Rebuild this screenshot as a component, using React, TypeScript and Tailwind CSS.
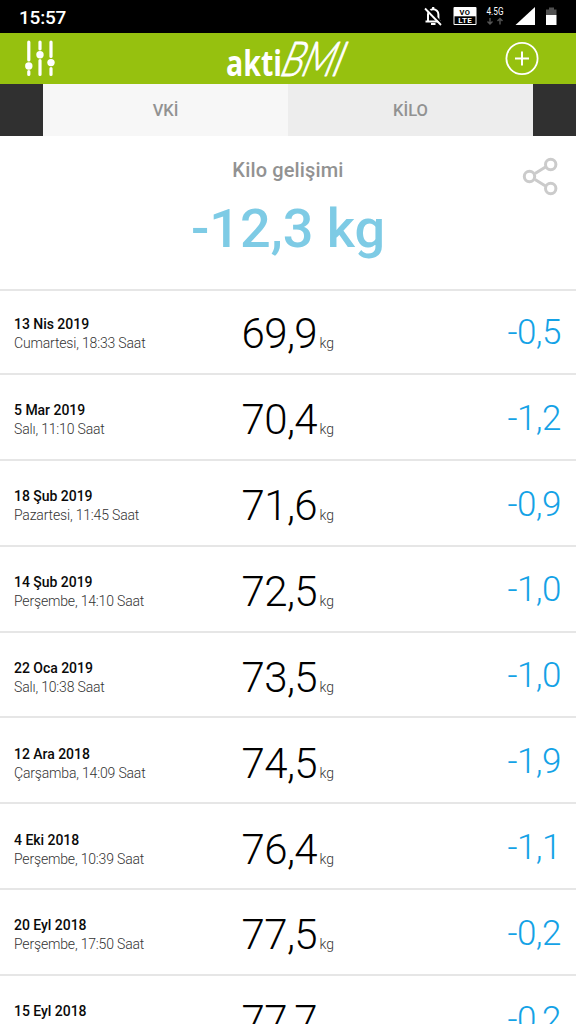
import React from 'react';

type Entry = { date: string; time?: string; weight: string; delta: string };

const entries: Entry[] = [
  { date: '13 Nis 2019', time: 'Cumartesi, 18:33 Saat', weight: '69,9', delta: '-0,5' },
  { date: '5 Mar 2019', time: 'Salı, 11:10 Saat', weight: '70,4', delta: '-1,2' },
  { date: '18 Şub 2019', time: 'Pazartesi, 11:45 Saat', weight: '71,6', delta: '-0,9' },
  { date: '14 Şub 2019', time: 'Perşembe, 14:10 Saat', weight: '72,5', delta: '-1,0' },
  { date: '22 Oca 2019', time: 'Salı, 10:38 Saat', weight: '73,5', delta: '-1,0' },
  { date: '12 Ara 2018', time: 'Çarşamba, 14:09 Saat', weight: '74,5', delta: '-1,9' },
  { date: '4 Eki 2018', time: 'Perşembe, 10:39 Saat', weight: '76,4', delta: '-1,1' },
  { date: '20 Eyl 2018', time: 'Perşembe, 17:50 Saat', weight: '77,5', delta: '-0,2' },
  { date: '15 Eyl 2018', weight: '77,7', delta: '-0,2' },
];

function StatusBar() {
  return (
    <div className="flex h-[33px] shrink-0 justify-between bg-black text-white">
      <span className="pl-[19px] pt-[7px] text-[19px] leading-[21px] font-medium tracking-[-0.2px]">15:57</span>
      <svg className="h-[33px] w-[166px]" viewBox="410 0 166 33" fill="none">
        <path d="M428 21V14.500a5.200 5.200 0 0 1 10.400 0V21M425.500 21.500h15.500" stroke="#fff" strokeWidth="2" />
        <path d="M433.200 7v3M431 24h4.500" stroke="#fff" strokeWidth="2.200" />
        <path d="M426.500 7.500 442.500 24" stroke="#000" strokeWidth="2" />
        <path d="M425 8.500 441 25" stroke="#fff" strokeWidth="1.800" />
        <rect x="453.500" y="7" width="23" height="18" rx="1" fill="#fff" />
        <rect x="454.500" y="16.300" width="21" height="7.700" fill="#000" />
        <text x="465" y="14.700" fontSize="7.500" fontWeight="700" textAnchor="middle" fill="#000" letterSpacing="0.500">VO</text>
        <text x="465.200" y="23.200" fontSize="8" fontWeight="700" textAnchor="middle" fill="#fff" letterSpacing="0.300">LTE</text>
        <text x="486.500" y="15" fontSize="10.500" textLength="17" lengthAdjust="spacingAndGlyphs" fill="#fff">4.5G</text>
        <path d="M490 18v6M487.500 21.500l2.500 2.500 2.500-2.500M500 24.500v-6M497.500 21l2.500-2.500 2.500 2.500" stroke="#555" strokeWidth="1.400" />
        <path d="M535 7v18h-19.500z" fill="#fff" />
        <path d="M549 7.500h5v2h2.500V15H546V9.500h3z" fill="#505050" />
        <path d="M546 15h10.500v10H546z" fill="#fff" />
      </svg>
    </div>
  );
}

function AppBar() {
  return (
    <header className="flex h-[51px] shrink-0 items-start justify-between bg-[#96c10f]">
      <svg className="h-[51px] w-[76px]" viewBox="0 33 76 51" fill="none" stroke="#fff" strokeWidth="3.200" strokeLinecap="round">
        <path d="M28.800 42v18M28.800 71.500v3M40 42v7M40 60.500v14M51 42v14.500M51 68.500v6" />
        <g fill="#fff" stroke="none">
          <circle cx="28.800" cy="66" r="3.700" />
          <circle cx="40" cy="54.800" r="3.700" />
          <circle cx="51" cy="62.600" r="3.700" />
        </g>
      </svg>
      <svg className="h-[51px] w-[140px]" viewBox="218 33 140 51" fill="#fff">
        <text x="226" y="75.500" fontSize="36" fontWeight="700" textLength="56" lengthAdjust="spacingAndGlyphs" className="font-['Open_Sans',sans-serif]">akti</text>
        <text
          transform="translate(279 75.500) skewX(-17) scale(0.780 1)"
          x="0 27 66"
          fontSize="48"
          fontWeight="300"
          fontStyle="italic"
          stroke="#fff"
          strokeWidth="1"
          strokeLinejoin="round"
          className="font-['Lato',sans-serif]"
        >
          BMI
        </text>
      </svg>
      <svg className="h-[51px] w-[76px]" viewBox="500 33 76 51" fill="none" stroke="#fff">
        <circle cx="522" cy="58.500" r="15.600" strokeWidth="1.800" />
        <path d="M515 58.500h14M522 51.500v14" strokeWidth="2" />
      </svg>
    </header>
  );
}

function Tabs() {
  return (
    <nav className="flex h-[52px] shrink-0 bg-[#303030] px-[43px] text-[16.5px] font-medium text-[#929292]">
      <button className="flex flex-1 items-center justify-center bg-[#f7f7f7] pt-[2px]">VKİ</button>
      <button className="flex flex-1 items-center justify-center bg-[#ededed] pt-[2px]">KİLO</button>
    </nav>
  );
}

function Summary() {
  return (
    <section className="relative flex h-[155px] shrink-0 flex-col items-center border-b-2 border-[#e6e6e6] pt-[22px]">
      <h1 className="text-[20px] leading-6 font-medium tracking-[0.15px] text-[#929292]">Kilo gelişimi</h1>
      <p className="mt-[14px] text-[54px] leading-[66px] font-medium text-[#7ecbe5]">-12,3 kg</p>
      <svg className="absolute top-[20px] right-[16px] h-[42px] w-[40px]" viewBox="520 156 40 42" fill="none" stroke="#cbcbcb" strokeWidth="3">
        <path d="M535 173.500l10.500-6.500M535 179.500l10.500 6.500" />
        <circle cx="529.500" cy="176.500" r="5.200" />
        <circle cx="550.700" cy="164.500" r="5.200" />
        <circle cx="550.700" cy="188.500" r="5.200" />
      </svg>
    </section>
  );
}

function Row({ entry, first }: { entry: Entry; first: boolean }) {
  return (
    <li
      className={`flex shrink-0 items-end border-b-2 border-[#e6e6e6] pr-[15px] pl-[14px] ${first ? 'h-[84px]' : 'h-[85.870px]'}`}
    >
      <div className="w-[227.500px] pb-[19.600px]">
        <div className="text-[14px] leading-[19px] font-medium tracking-[-0.030px] text-[#0a0a0a]">{entry.date}</div>
        <div className="h-[19px] text-[14px] leading-[19px] font-light tracking-[-0.170px] text-[#333]">{entry.time}</div>
      </div>
      <div className="flex flex-1 items-baseline pb-[13.600px] font-light">
        <span className="text-[42px] leading-[50px] tracking-[-0.600px] text-black">{entry.weight}</span>
        <span className="ml-[2.500px] text-[14px] text-[#333]">kg</span>
      </div>
      <div className="pb-[19.200px] text-[35px] leading-[42px] font-light tracking-[-0.500px] text-[#14a2e6]">{entry.delta}</div>
    </li>
  );
}

export default function App() {
  return (
    <div className="flex h-[1024px] w-[576px] flex-col overflow-hidden bg-white font-['Roboto',sans-serif]">
      <StatusBar />
      <AppBar />
      <Tabs />
      <Summary />
      <ul className="flex flex-col">
        {entries.map((entry, i) => (
          <Row key={entry.date} entry={entry} first={i === 0} />
        ))}
      </ul>
    </div>
  );
}
